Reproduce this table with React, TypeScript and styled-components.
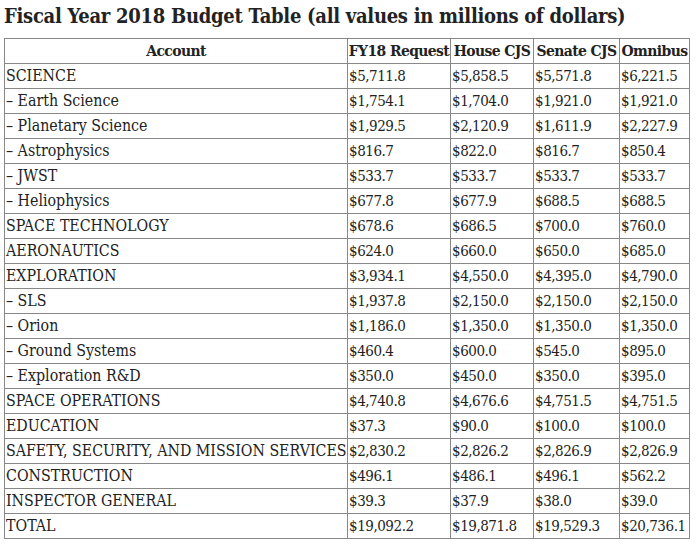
import React from "react";
import styled, { createGlobalStyle } from "styled-components";

const Global = createGlobalStyle`
  html, body { margin: 0; padding: 0; background: #fff; }
  body { font-family: "DejaVu Serif Condensed", "DejaVu Serif", serif; color: #222; }
`;

const Page = styled.div`
  padding: 4px 0 0 4px;
  width: 700px;
  box-sizing: border-box;
`;

const Title = styled.h2`
  margin: 0 0 9px 0;
  font-size: 20px;
  line-height: 25px;
  letter-spacing: -0.28px;
  font-weight: bold;
  white-space: nowrap;
  color: #222;
`;

const Table = styled.table`
  border-collapse: collapse;
  table-layout: fixed;
  width: 685px;
  border: 1px solid #333;
  font-size: 15px;
`;

const Th = styled.th`
  border: 1px solid #888;
  height: 24px;
  padding: 0;
  font-size: 15.5px;
  font-weight: bold;
  letter-spacing: -0.6px;
  text-align: center;
  white-space: nowrap;
  overflow: visible;
  line-height: 24px;
`;

const Td = styled.td<{ $label?: boolean }>`
  border: 1px solid #888;
  height: 24px;
  padding: 0 1px;
  text-align: left;
  white-space: nowrap;
  overflow: hidden;
  line-height: 24px;
  font-size: ${(p) => (p.$label ? "15.8px" : "15px")};
  letter-spacing: ${(p) => (p.$label ? "0" : "-0.45px")};
`;

const widths = [343, 103, 83, 86, 70];

const rows: [string, string, string, string, string][] = [
  ["SCIENCE", "$5,711.8", "$5,858.5", "$5,571.8", "$6,221.5"],
  ["– Earth Science", "$1,754.1", "$1,704.0", "$1,921.0", "$1,921.0"],
  ["– Planetary Science", "$1,929.5", "$2,120.9", "$1,611.9", "$2,227.9"],
  ["– Astrophysics", "$816.7", "$822.0", "$816.7", "$850.4"],
  ["– JWST", "$533.7", "$533.7", "$533.7", "$533.7"],
  ["– Heliophysics", "$677.8", "$677.9", "$688.5", "$688.5"],
  ["SPACE TECHNOLOGY", "$678.6", "$686.5", "$700.0", "$760.0"],
  ["AERONAUTICS", "$624.0", "$660.0", "$650.0", "$685.0"],
  ["EXPLORATION", "$3,934.1", "$4,550.0", "$4,395.0", "$4,790.0"],
  ["– SLS", "$1,937.8", "$2,150.0", "$2,150.0", "$2,150.0"],
  ["– Orion", "$1,186.0", "$1,350.0", "$1,350.0", "$1,350.0"],
  ["– Ground Systems", "$460.4", "$600.0", "$545.0", "$895.0"],
  ["– Exploration R&D", "$350.0", "$450.0", "$350.0", "$395.0"],
  ["SPACE OPERATIONS", "$4,740.8", "$4,676.6", "$4,751.5", "$4,751.5"],
  ["EDUCATION", "$37.3", "$90.0", "$100.0", "$100.0"],
  ["SAFETY, SECURITY, AND MISSION SERVICES", "$2,830.2", "$2,826.2", "$2,826.9", "$2,826.9"],
  ["CONSTRUCTION", "$496.1", "$486.1", "$496.1", "$562.2"],
  ["INSPECTOR GENERAL", "$39.3", "$37.9", "$38.0", "$39.0"],
  ["TOTAL", "$19,092.2", "$19,871.8", "$19,529.3", "$20,736.1"],
];

export default function App() {
  return (
    <Page>
      <Global />
      <Title>Fiscal Year 2018 Budget Table (all values in millions of dollars)</Title>
      <Table>
        <colgroup>
          {widths.map((w, i) => (
            <col key={i} style={{ width: w }} />
          ))}
        </colgroup>
        <thead>
          <tr>
            <Th>Account</Th>
            <Th>FY18 Request</Th>
            <Th>House CJS</Th>
            <Th>Senate CJS</Th>
            <Th>Omnibus</Th>
          </tr>
        </thead>
        <tbody>
          {rows.map((r) => (
            <tr key={r[0]}>
              {r.map((c, i) => (
                <Td key={i} $label={i === 0}>
                  {c}
                </Td>
              ))}
            </tr>
          ))}
        </tbody>
      </Table>
    </Page>
  );
}
